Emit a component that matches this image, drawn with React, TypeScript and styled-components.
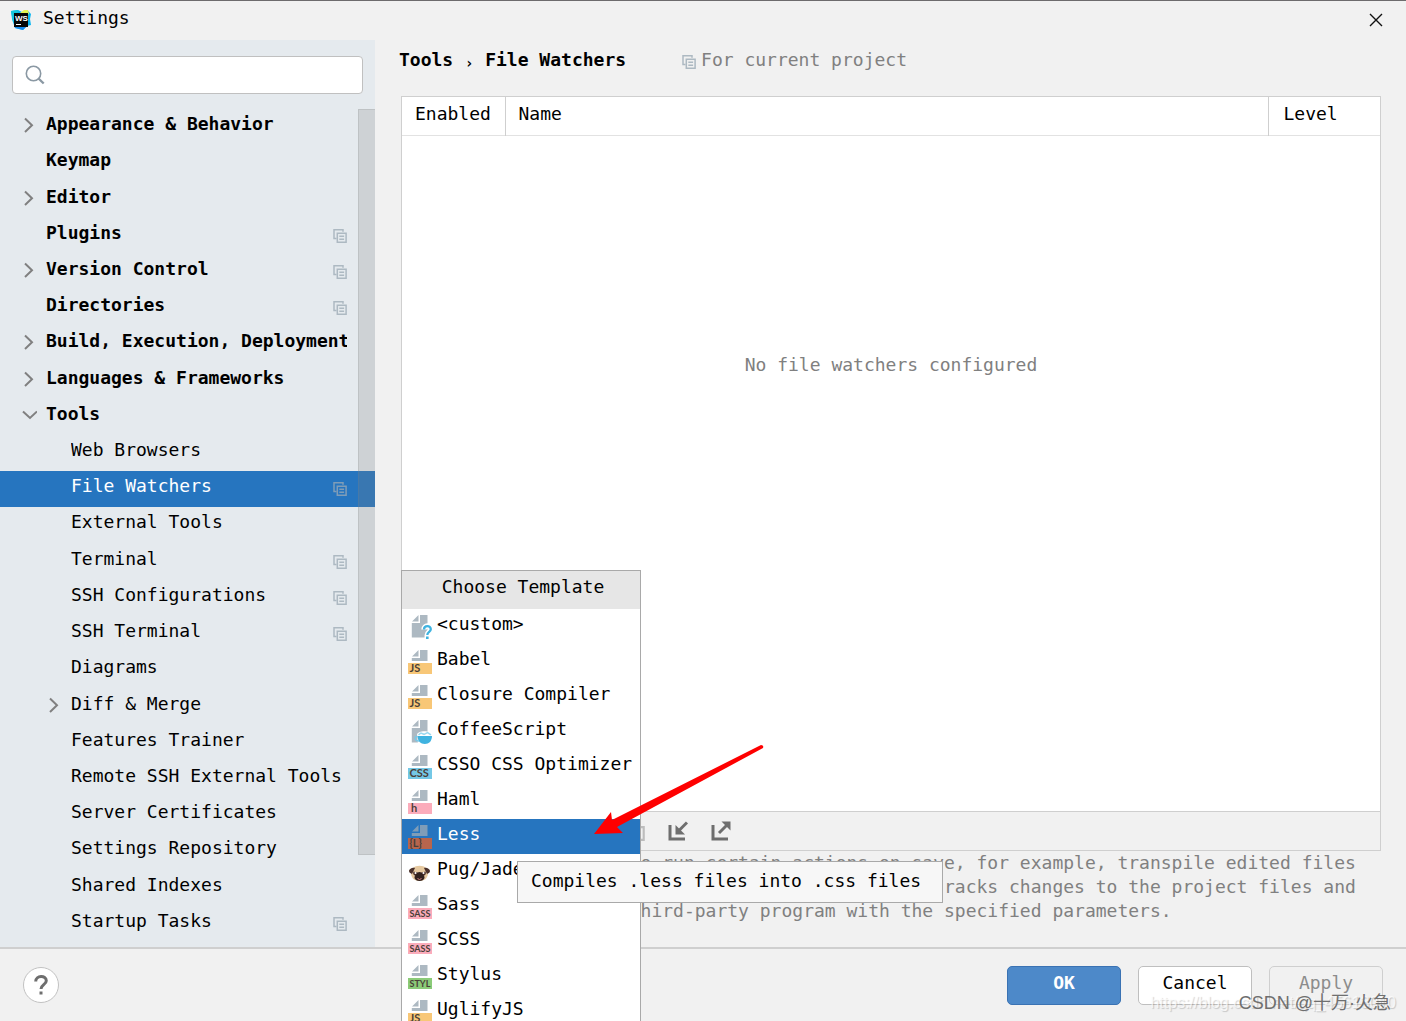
import React from "react";
import styled, { createGlobalStyle, css } from "styled-components";

const color = {
  window: "#f1f1f1",
  side: "#e5eaee",
  select: "#2675bf",
  line: "#cfcfcf",
  text: "#000000",
  muted: "#808080",
  icon: "#adb9c2",
};

const GlobalStyle = createGlobalStyle`
  *, *::before, *::after { box-sizing: border-box; }
  html, body, #root { height: 100%; margin: 0; overflow: hidden; }
  body, button, input, table {
    font-family: "DejaVu Sans Mono", "Liberation Mono", monospace;
    font-size: 18px;
    line-height: 24px;
    color: ${color.text};
  }
  button { padding: 0; margin: 0; border: 0; background: none; text-align: left; }
  svg { display: block; flex: none; }
`;

const Window = styled.div`
  position: relative;
  display: flex;
  flex-direction: column;
  height: 100vh;
  overflow: hidden;
  background: ${color.window};
  border-top: 1px solid #6d6b6d;
`;

const TitleBar = styled.header`
  display: flex;
  align-items: center;
  height: 39px;
  padding: 0 23px 2px 10px;
  gap: 11px;
`;

const WindowTitle = styled.h1`
  flex: 1;
  margin: 0;
  padding-bottom: 4px;
  font-size: 18px;
  font-weight: 400;
`;

const Body = styled.div`
  display: flex;
  flex: 1;
  min-height: 0;
`;

const Sidebar = styled.aside`
  display: flex;
  flex-direction: column;
  flex: none;
  width: 375px;
  padding: 16px 0 5px;
  background: ${color.side};
`;

const SearchBox = styled.label`
  display: flex;
  align-items: center;
  height: 38px;
  margin: 0 12px 15px;
  padding: 0 12px;
  gap: 8px;
  background: #fff;
  border: 1px solid #c0c0c0;
  border-radius: 4px;
`;

const SearchInput = styled.input`
  flex: 1;
  min-width: 0;
  border: 0;
  outline: 0;
  background: transparent;
`;

const TreeArea = styled.div`
  position: relative;
  flex: 1;
  min-height: 0;
`;

const Tree = styled.ul`
  display: grid;
  grid-template-columns: minmax(0, 1fr);
  grid-auto-rows: 1fr;
  height: 100%;
  margin: 0;
  padding: 0;
  list-style: none;
`;

const TreeRow = styled.button<{ $depth: number; $bold?: boolean; $selected?: boolean }>`
  display: flex;
  align-items: center;
  width: 100%;
  height: 100%;
  padding: 0 28px 0 ${(p) => 20 + p.$depth * 25}px;
  gap: 8px;
  font-weight: ${(p) => (p.$bold ? 700 : 400)};
  ${(p) => p.$selected && css`background: ${color.select}; color: #fff;`}
`;

const ChevronSlot = styled.span`
  display: flex;
  justify-content: center;
  width: 18px;
  padding-bottom: 4px;
  flex: none;
`;

const RowLabel = styled.span`
  flex: 1;
  min-width: 0;
  padding-bottom: 6px;
  overflow: hidden;
  white-space: nowrap;
`;

const ScrollThumb = styled.div`
  position: absolute;
  top: 0;
  right: 0;
  width: 17px;
  height: 746px;
  max-height: 100%;
  background: rgba(128, 128, 128, 0.22);
  border: 1px solid rgba(128, 128, 128, 0.2);
  border-right: 0;
`;

const Main = styled.main`
  display: flex;
  flex-direction: column;
  flex: 1;
  min-width: 0;
  padding: 8px 25px 24px 26px;
`;

const Crumbs = styled.nav`
  display: flex;
  align-items: center;
  height: 48px;
  padding-bottom: 24px;
  margin-left: -2px;
  font-weight: 700;
`;

const CrumbMark = styled.span`
  width: 32px;
  padding-top: 6px;
  font-size: 14px;
  text-align: center;
`;

const Scope = styled.span`
  display: flex;
  align-items: center;
  margin-left: 56px;
  gap: 5px;
  font-weight: 400;
  color: ${color.muted};
  svg { margin-top: 4px; }
`;

const Panel = styled.section`
  display: flex;
  flex-direction: column;
  flex: 1;
  min-height: 0;
  border: 1px solid ${color.line};
  background: #fff;
`;

const WatcherTable = styled.table`
  width: 100%;
  table-layout: fixed;
  border-collapse: collapse;
  border-bottom: 1px solid #e2e2e2;
`;

const HeadCell = styled.th<{ $width?: number }>`
  width: ${(p) => (p.$width ? p.$width + "px" : "auto")};
  height: 38px;
  padding: 0 0 4px 13px;
  font-weight: 400;
  text-align: left;
  border-right: 1px solid ${color.line};
  &:last-child { border-right: 0; padding-left: 15px; }
`;

const EmptyState = styled.p`
  flex: 1;
  margin: 0;
  padding-top: 217px;
  text-align: center;
  color: ${color.muted};
`;

const Toolbar = styled.div`
  display: flex;
  height: 39px;
  background: ${color.window};
  border-top: 1px solid ${color.line};
`;

const ToolButton = styled.button`
  display: flex;
  align-items: center;
  justify-content: center;
  width: 43px;
  height: 100%;
  padding-right: 8px;
`;

const Description = styled.p`
  margin: 0;
  padding: 0 12px;
  color: ${color.muted};
`;

const Footer = styled.footer`
  display: flex;
  align-items: center;
  height: 74px;
  padding: 0 23px;
  gap: 17px;
  border-top: 2px solid ${color.line};
`;

const HelpButton = styled.button`
  display: flex;
  align-items: center;
  justify-content: center;
  width: 36px;
  height: 36px;
  margin-right: auto;
  background: #fff;
  border: 1px solid #c2c2c2;
  border-radius: 50%;
`;

const DialogButton = styled.button<{ $kind?: "primary" | "disabled" }>`
  width: 114px;
  height: 39px;
  padding-bottom: 4px;
  text-align: center;
  background: #fff;
  border: 1px solid #bfbfbf;
  border-radius: 5px;
  ${(p) =>
    p.$kind === "primary" &&
    css`
      background: #4d89c9;
      border-color: #3a72b3;
      color: #fff;
      font-weight: 700;
    `}
  ${(p) =>
    p.$kind === "disabled" &&
    css`
      background: transparent;
      border-color: #cfcfcf;
      color: #8c8c8c;
    `}
`;

const Popup = styled.div`
  position: absolute;
  left: 401px;
  top: 569px;
  width: 240px;
  background: #fff;
  border: 1px solid #a9a9a9;
`;

const PopupTitle = styled.h2`
  margin: 0;
  height: 38px;
  padding: 4px 0 0 4px;
  font-size: 18px;
  font-weight: 400;
  text-align: center;
  background: #e6e6e6;
`;

const Option = styled.button<{ $selected?: boolean }>`
  display: flex;
  align-items: center;
  width: 100%;
  height: 35px;
  padding: 0 0 6px 6px;
  gap: 5px;
  white-space: nowrap;
  ${(p) => p.$selected && css`background: ${color.select}; color: #fff;`}
  svg { margin-top: 6px; }
`;

const Tooltip = styled.div`
  position: absolute;
  left: 517px;
  top: 860px;
  width: 426px;
  height: 42px;
  padding: 7px 13px;
  white-space: nowrap;
  background: #f7f7f7;
  border: 1px solid #a9a9a9;
`;

const Arrow = styled.svg`
  position: absolute;
  left: 590px;
  top: 739px;
`;

const Watermark = styled.div<{ $faint?: boolean }>`
  position: absolute;
  right: ${(p) => (p.$faint ? 10 : 15)}px;
  bottom: 6px;
  font-family: "Liberation Sans", "Noto Sans CJK SC", sans-serif;
  font-size: ${(p) => (p.$faint ? 16 : 18)}px;
  line-height: 24px;
  white-space: nowrap;
  pointer-events: none;
  color: ${(p) => (p.$faint ? "rgba(255, 255, 255, 0.7)" : "#6f6f6f")};
  text-shadow: ${(p) => (p.$faint ? "1px 1px 1px rgba(0, 0, 0, 0.18)" : "none")};
`;

const Logo = () => (
  <svg width="22" height="22" viewBox="0 0 22 22">
    <path d="M1 2l7-1 4 2 5-2 4 4-1 5 1 6-4 1-4 4-8-2-3-9z" fill="#07b6f2" />
    <path d="M1 2l7-1 1 6-6 6z" fill="#13c8dc" />
    <path d="M10 4l4-3 4 0 1 4-5 2z" fill="#e4f34f" />
    <path d="M4 15l1 4 8 2 4-4z" fill="#1389ef" />
    <rect x="4" y="4" width="14" height="14" fill="#050505" />
    <text x="5" y="12" fontFamily="Liberation Sans, sans-serif" fontSize="8" fontWeight="700" fill="#fff">WS</text>
    <rect x="6" y="15" width="5" height="1" fill="#fff" />
  </svg>
);

const CopyIcon = ({ stroke = color.icon, size = 14 }: { stroke?: string; size?: number }) => (
  <svg width={size} height={size} viewBox="0 0 14 14" fill="none" stroke={stroke}>
    <path d="M3.500 9.500H1V.8h9v2" strokeWidth="1.500" />
    <path d="M4.300 4.300h8.800v8.900H4.300z" strokeWidth="1.500" />
    <path d="M6.300 7.300h4.800M6.300 10.200h4.800" strokeWidth="1.500" />
  </svg>
);

const Chevron = ({ open }: { open?: boolean }) => (
  <svg width="16" height="16" viewBox="0 0 16 16" fill="none" stroke="#808080" strokeWidth="2">
    {open ? <path d="M2 4.500l7 6.500 7-6.500" /> : <path d="M4 1.500l7 6.700L4 15" />}
  </svg>
);

const SearchIcon = () => (
  <svg width="20" height="20" viewBox="0 0 20 20" fill="none" stroke="#8a98a3">
    <circle cx="8.500" cy="8.500" r="7.200" strokeWidth="1.600" />
    <path d="M13.500 13.500l5.200 5" strokeWidth="2.400" />
  </svg>
);

const CloseIcon = () => (
  <svg width="14" height="14" viewBox="0 0 14 14" stroke="#111" strokeWidth="1.400">
    <path d="M1 1l12 12M13 1L1 13" />
  </svg>
);

const toolPaths: Record<string, React.ReactNode> = {
  Add: <path d="M10 3v14M3 10h14" />,
  Remove: <path d="M3 10h14" />,
  Edit: <path d="M3 17l1-4L14 3l3 3L7 16z" />,
  Up: <path d="M4 13l6-6 6 6" />,
  Down: <path d="M4 7l6 6 6-6" />,
  Import: (
    <>
      <path d="M2 4v14h15" strokeWidth="3" />
      <path d="M19 1.500l-8 8" strokeWidth="3" />
      <path d="M7.500 4v9.500H17z" fill="#6e6e6e" stroke="none" />
    </>
  ),
  Export: (
    <>
      <path d="M2 4v14h15" strokeWidth="3" />
      <path d="M8 12l8-8" strokeWidth="3" />
      <path d="M10.500.5h9v9z" fill="#6e6e6e" stroke="none" />
    </>
  ),
};

const ToolIcon = ({ name }: { name: string }) => (
  <svg width="20" height="20" viewBox="0 0 20 20" fill="none" stroke="#6e6e6e" strokeWidth="2">
    {toolPaths[name]}
  </svg>
);

type Kind = "custom" | "coffee" | "pug" | "tag";

const FileIcon = ({ kind, tag, fill, selected }: { kind: Kind; tag?: string; fill?: string; selected?: boolean }) => {
  const sheet = selected ? "#7f9db8" : color.icon;
  if (kind === "pug") {
    return (
      <svg width="24" height="24" viewBox="0 0 24 24">
        <path d="M5 8c3-3 10-3 13 0l2 6c-1 5-4 7-8.500 7S4 19 3 14z" fill="#e6c9a0" />
        <path d="M1 11c0-2 4-4 6-3l-3 6c-1-1-3-1-3-3zM22 11c0-2-4-4-6-3l3 6c1-1 3-1 3-3z" fill="#4a302a" />
        <path d="M6.500 18c0-3 2-6 5-6s5 3 5 6c-1 4-9 4-10 0z" fill="#33221f" />
        <path d="M5.500 11.500l4 1-2 3c-2 0-3-2-2-4zM17.500 11.500l-4 1 2 3c2 0 3-2 2-4z" fill="#4a302a" />
        <circle cx="7.500" cy="13" r="1" fill="#fff" />
        <circle cx="15.500" cy="13" r="1" fill="#fff" />
        <path d="M9.500 18.500q2 2 4 0" stroke="#d3817e" strokeWidth="1" fill="none" />
      </svg>
    );
  }
  if (kind === "tag") {
    const size = tag!.length > 3 ? 9 : 11;
    return (
      <svg width="24" height="24" viewBox="0 0 24 24">
        <path d="M4 6.500L10.500 0v6.500zM12 0h7.500v11H3.800V8H12z" fill={sheet} />
        <rect x="0" y="13" width="24" height="11" fill={fill} />
        <text x={tag === "h" ? 3 : 1.5} y="22.300" fontFamily="Lato, sans-serif" fontSize={size} fontWeight="700" fill="#4a3f38">
          {tag}
        </text>
      </svg>
    );
  }
  return (
    <svg width="24" height="24" viewBox="0 0 24 24" fill="none">
      <path d="M4 6.500L10.500 0v6.500zM12 0h7.500v22.500H3.800V8H12z" fill={sheet} />
      {kind === "custom" ? (
        <>
          <path d="M16 14.500c0-4.500 6.800-4.500 6.800-.3 0 2.800-3.500 2.500-3.500 6v3" stroke="#fff" strokeWidth="5.500" />
          <path d="M16 14.500c0-4.500 6.800-4.500 6.800-.3 0 2.800-3.500 2.500-3.500 5.800" stroke="#3fb3e0" strokeWidth="2.300" />
          <rect x="18" y="21.500" width="2.600" height="2.500" fill="#3fb3e0" />
        </>
      ) : (
        <>
          <path d="M9 15c0-5 15-5 15 0v9H10z" fill="#fff" />
          <path d="M9.500 16H24c0 5-3 8-7.200 8s-7.300-3-7.300-8z" fill="#3fb3e0" />
          <path d="M9.500 16.500c-4-.5-3 4.500 1.500 4.500" stroke="#77c9e9" strokeWidth="1.300" />
          <path d="M10.500 14.800l2.500-1.800 3 1.300 3.500-1.800 3.500 2.300" stroke="#9bd8ef" strokeWidth="1.500" />
        </>
      )}
    </svg>
  );
};

interface Node {
  label: string;
  depth?: number;
  arrow?: "open" | "closed";
  project?: boolean;
  selected?: boolean;
}

const nodes: Node[] = [
  { label: "Appearance & Behavior", arrow: "closed" },
  { label: "Keymap" },
  { label: "Editor", arrow: "closed" },
  { label: "Plugins", project: true },
  { label: "Version Control", arrow: "closed", project: true },
  { label: "Directories", project: true },
  { label: "Build, Execution, Deployment", arrow: "closed" },
  { label: "Languages & Frameworks", arrow: "closed" },
  { label: "Tools", arrow: "open" },
  { label: "Web Browsers", depth: 1 },
  { label: "File Watchers", depth: 1, project: true, selected: true },
  { label: "External Tools", depth: 1 },
  { label: "Terminal", depth: 1, project: true },
  { label: "SSH Configurations", depth: 1, project: true },
  { label: "SSH Terminal", depth: 1, project: true },
  { label: "Diagrams", depth: 1 },
  { label: "Diff & Merge", depth: 1, arrow: "closed" },
  { label: "Features Trainer", depth: 1 },
  { label: "Remote SSH External Tools", depth: 1 },
  { label: "Server Certificates", depth: 1 },
  { label: "Settings Repository", depth: 1 },
  { label: "Shared Indexes", depth: 1 },
  { label: "Startup Tasks", depth: 1, project: true },
];

const templates: { label: string; kind: Kind; tag?: string; fill?: string; selected?: boolean }[] = [
  { label: "<custom>", kind: "custom" },
  { label: "Babel", kind: "tag", tag: "JS", fill: "#f8c777" },
  { label: "Closure Compiler", kind: "tag", tag: "JS", fill: "#f8c777" },
  { label: "CoffeeScript", kind: "coffee" },
  { label: "CSSO CSS Optimizer", kind: "tag", tag: "CSS", fill: "#74c8e6" },
  { label: "Haml", kind: "tag", tag: "h", fill: "#fbacbb" },
  { label: "Less", kind: "tag", tag: "{L}", fill: "#b7654d", selected: true },
  { label: "Pug/Jade", kind: "pug" },
  { label: "Sass", kind: "tag", tag: "SASS", fill: "#fbacbb" },
  { label: "SCSS", kind: "tag", tag: "SASS", fill: "#fbacbb" },
  { label: "Stylus", kind: "tag", tag: "STYL", fill: "#8bcb78" },
  { label: "UglifyJS", kind: "tag", tag: "JS", fill: "#f8c777" },
];

const tools = ["Add", "Remove", "Edit", "Up", "Down", "Copy", "Import", "Export"];

export default function App() {
  return (
    <>
      <GlobalStyle />
      <Window>
        <TitleBar>
          <Logo />
          <WindowTitle>Settings</WindowTitle>
          <button aria-label="Close"><CloseIcon /></button>
        </TitleBar>
        <Body>
          <Sidebar>
            <SearchBox>
              <SearchIcon />
              <SearchInput type="text" aria-label="Search settings" />
            </SearchBox>
            <TreeArea>
              <Tree>
                {nodes.map((n) => (
                  <li key={n.label}>
                    <TreeRow $depth={n.depth ?? 0} $bold={!n.depth} $selected={n.selected}>
                      <ChevronSlot>{n.arrow && <Chevron open={n.arrow === "open"} />}</ChevronSlot>
                      <RowLabel>{n.label}</RowLabel>
                      {n.project && <CopyIcon stroke={n.selected ? "#7f9db8" : color.icon} />}
                    </TreeRow>
                  </li>
                ))}
              </Tree>
              <ScrollThumb />
            </TreeArea>
          </Sidebar>
          <Main>
            <Crumbs>
              <span>Tools</span>
              <CrumbMark>›</CrumbMark>
              <span>File Watchers</span>
              <Scope><CopyIcon />For current project</Scope>
            </Crumbs>
            <Panel>
              <WatcherTable>
                <thead>
                  <tr>
                    <HeadCell $width={103}>Enabled</HeadCell>
                    <HeadCell>Name</HeadCell>
                    <HeadCell $width={112}>Level</HeadCell>
                  </tr>
                </thead>
              </WatcherTable>
              <EmptyState>No file watchers configured</EmptyState>
              <Toolbar>
                {tools.map((t) => (
                  <ToolButton key={t} aria-label={t}>
                    {t === "Copy" ? <CopyIcon stroke="#bdbdbd" size={20} /> : <ToolIcon name={t} />}
                  </ToolButton>
                ))}
              </Toolbar>
            </Panel>
            <Description>
              File Watchers allow to run certain actions on save, for example, transpile edited files into a
              browser-supported code. The file watcher tracks changes to the project files and runs the configured
              third-party program with the specified parameters.
            </Description>
          </Main>
        </Body>
        <Footer>
          <HelpButton aria-label="Help">
            <svg width="16" height="20" viewBox="0 0 16 20" fill="none" stroke="#6e6e6e" strokeWidth="3">
              <path d="M2.700 6.500c0-6.500 10.600-6.500 10.600-.8 0 4-5.300 4-5.300 8.300" />
              <path d="M8 16.500v3" />
            </svg>
          </HelpButton>
          <DialogButton $kind="primary">OK</DialogButton>
          <DialogButton>Cancel</DialogButton>
          <DialogButton $kind="disabled" disabled>Apply</DialogButton>
        </Footer>

        <Popup>
          <PopupTitle>Choose Template</PopupTitle>
          {templates.map(({ label, ...icon }) => (
            <Option key={label} $selected={icon.selected}>
              <FileIcon {...icon} />
              {label}
            </Option>
          ))}
        </Popup>
        <Tooltip role="tooltip">Compiles .less files into .css files</Tooltip>
        <Arrow width="180" height="100" viewBox="590 740 180 100" aria-hidden="true">
          <path d="M594 834L611 812l1 8L761 745q3 0 2 3L617 827l6 6z" fill="#fe0000" />
        </Arrow>
        <Watermark $faint>https://blog.csdn.net/qq_45613010</Watermark>
        <Watermark>CSDN @十万·火急</Watermark>
      </Window>
    </>
  );
}
